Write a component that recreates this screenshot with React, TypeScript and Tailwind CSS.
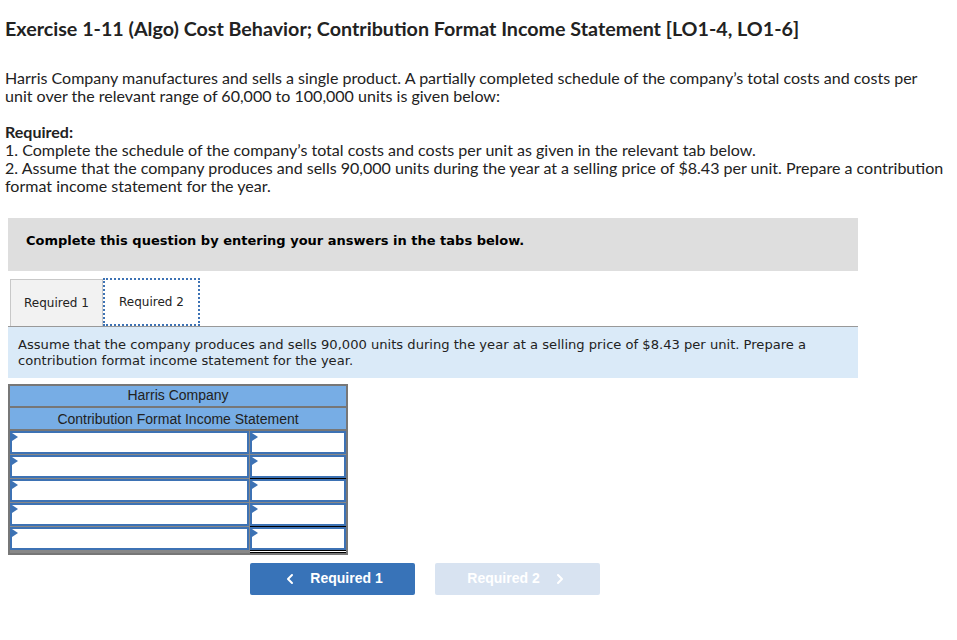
import React from 'react';
import { ChevronLeft, ChevronRight } from 'lucide-react';

// line under the right-hand amount cell
const rows: ('none' | 'single' | 'double')[] = ['none', 'single', 'none', 'single', 'double'];

function Cell({ className }: { className?: string }) {
  return (
    <div className={`relative h-[23px] border-2 border-[#3d72b4] bg-white ${className ?? ''}`}>
      <span className="absolute left-0 top-0 h-0 w-0 border-y-[4px] border-l-[6px] border-y-transparent border-l-[#3d72b4]" />
    </div>
  );
}

export default function App() {
  return (
    <div className="bg-white text-[#1a1a1a] pb-10" style={{ width: 957 }}>
      <h1 className="px-[5px] pt-[14px] text-[19.7px] font-bold font-['Lato',sans-serif] text-[#222] whitespace-nowrap">
        Exercise 1-11 (Algo) Cost Behavior; Contribution Format Income Statement [LO1-4, LO1-6]
      </h1>

      <div className="px-[5px] pt-[25px] text-[16.05px] leading-[18px] font-['Lato',sans-serif] text-[#222] whitespace-nowrap">
        <p>
          Harris Company manufactures and sells a single product. A partially completed schedule of the company’s total costs and costs per
          <br />
          unit over the relevant range of 60,000 to 100,000 units is given below:
        </p>
        <p className="mt-[18px] font-bold">Required:</p>
        <p>1. Complete the schedule of the company’s total costs and costs per unit as given in the relevant tab below.</p>
        <p>
          2. Assume that the company produces and sells 90,000 units during the year at a selling price of $8.43 per unit. Prepare a contribution
          <br />
          format income statement for the year.
        </p>
      </div>

      <div className="mx-[8px] mt-[23px] w-[850px] h-[53px] bg-[#dedede] px-[18px] pt-[13px] font-['DejaVu_Sans',sans-serif] text-[13px] font-bold text-black">
        Complete this question by entering your answers in the tabs below.
      </div>

      <div className="mx-[8px] mt-[7px] w-[850px] font-['DejaVu_Sans',sans-serif] text-[12px]">
        <div className="flex pl-[2px] items-end">
          <div className="h-[47px] w-[93px] flex items-center justify-center bg-[#f2f2f2] border border-b-0 border-[#c8c8c8] text-[#222]">
            Required 1
          </div>
          <div className="h-[48px] w-[97px] flex items-center justify-center bg-white border-2 border-dotted border-[#3d72b4] text-[#222]">
            Required 2
          </div>
        </div>
        <div className="border-t border-[#999] bg-[#daeaf8] h-[52px] px-[10px] pt-[10px] text-[13.1px] leading-[16px] text-[#222] whitespace-nowrap">
          Assume that the company produces and sells 90,000 units during the year at a selling price of $8.43 per unit. Prepare a
          <br />
          contribution format income statement for the year.
        </div>
      </div>

      <div className="ml-[8px] mt-[6px] w-[340px] border-2 border-[#777] bg-[#888] font-['Liberation_Sans',sans-serif] text-[14px] text-[#222]">
        <div className="h-[22px] bg-[#77ade5] flex items-center justify-center border-b-2 border-[#777]">Harris Company</div>
        <div className="h-[23px] bg-[#77ade5] flex items-center justify-center pt-[2px] border-b-2 border-[#777]">
          Contribution Format Income Statement
        </div>
        {rows.map((line, i) => (
          <div key={i} className="flex gap-[1px]">
            <div className="w-[239px]">
              <Cell />
              {i < rows.length - 1 && <div className="h-[1px]" />}
            </div>
            <div className="flex-1">
              <Cell />
              {line === 'single' && <div className="h-[1px] bg-black" />}
              {line === 'none' && i < rows.length - 1 && <div className="h-[1px]" />}
              {line === 'double' && <div className="h-[3px] border-y border-black bg-white" />}
            </div>
          </div>
        ))}
      </div>

      <div className="flex gap-[20px] ml-[250px] mt-[8px] font-['Liberation_Sans',sans-serif] text-[14px] font-bold">
        <button className="w-[165px] h-[32px] rounded-[2px] bg-[#3873b8] text-white flex items-center justify-center gap-[12px]">
          <ChevronLeft className="w-[16px] h-[16px]" strokeWidth={3} />
          Required 1
        </button>
        <button className="w-[165px] h-[32px] rounded-[2px] bg-[#d8e3f1] text-white flex items-center justify-center gap-[12px]">
          Required 2
          <ChevronRight className="w-[16px] h-[16px]" strokeWidth={3} />
        </button>
      </div>
    </div>
  );
}
